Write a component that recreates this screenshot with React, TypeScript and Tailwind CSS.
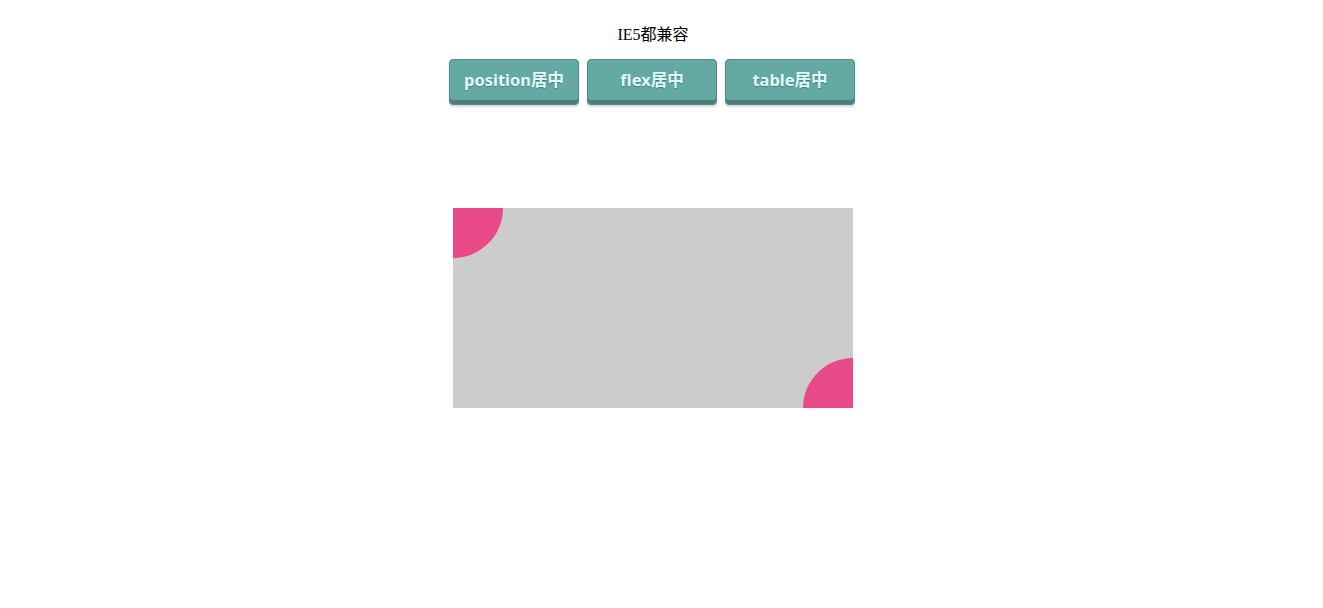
export default function App() {
  const buttons = ["position居中", "flex居中", "table居中"];
  return (
    <div className="flex flex-col items-center bg-white min-h-[608px] pt-[24px] pr-[17px]">
      <p className="text-[16px] leading-[22px] text-black [font-family:'Liberation_Serif','Noto_Sans_CJK_SC',serif]">
        IE5都兼容
      </p>
      <div className="flex gap-2 mt-[13px] pr-[2px]">
        {buttons.map((b) => (
          <button
            key={b}
            className="w-[130px] h-[46px] pb-[4px] rounded-[4px] border border-[#4f8c86] bg-[#64a9a3] text-[#e0fcfc] text-[16.5px] font-bold [font-family:'Noto_Sans','Noto_Sans_CJK_SC',sans-serif] shadow-[inset_0_-4px_0_#4b7d79,0_2px_2px_rgba(0,0,0,0.15)] [text-shadow:0_1px_1px_rgba(0,0,0,0.25)]"
          >
            {b}
          </button>
        ))}
      </div>
      <div className="mt-[103px] w-[400px] h-[200px] bg-[#cccccc] flex flex-col justify-between">
        <div className="w-[50px] h-[50px] bg-[#e84a87] rounded-br-[50px]" />
        <div className="w-[50px] h-[50px] bg-[#e84a87] rounded-tl-[50px] self-end" />
      </div>
    </div>
  );
}
